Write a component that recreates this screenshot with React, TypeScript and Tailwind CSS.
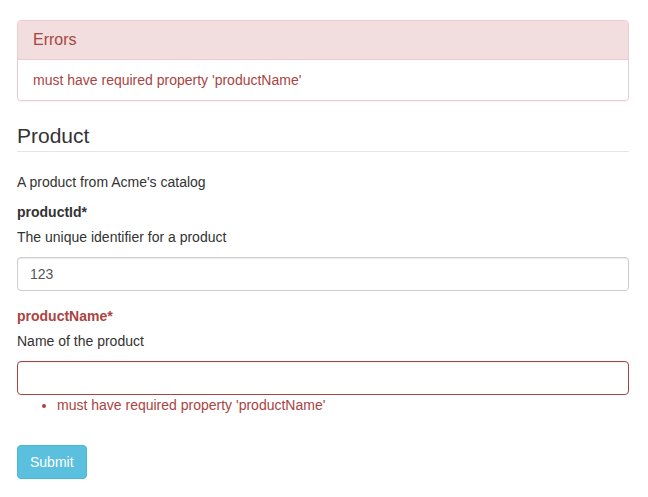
export default function App() {
  return (
    <div className="min-h-[497px] bg-white pl-[17px] pr-[19px] pt-[20px] font-['Liberation_Sans',Arial,sans-serif] text-[14px] leading-[20px] text-[#333]">
      <div className="mb-[20px] rounded-[4px] border border-[#ebccd1] shadow-[0_1px_1px_rgba(0,0,0,0.05)]">
        <div className="rounded-t-[3px] border-b border-[#ebccd1] bg-[#f2dede] px-[15px] py-[10px]">
          <h3 className="text-[16px] leading-[17.6px] text-[#a94442]">Errors</h3>
        </div>
        <ul>
          <li className="px-[15px] py-[10px] text-[#a94442]">must have required property 'productName'</li>
        </ul>
      </div>

      <form>
        <fieldset>
          <legend className="mb-[20px] w-full border-b border-[#e5e5e5] text-[21px] leading-[30px] text-[#333]">Product</legend>
          <p className="mb-[10px]">A product from Acme's catalog</p>

          <Field label="productId*" description="The unique identifier for a product" value="123" />
          <Field label="productName*" description="Name of the product" value="" error="must have required property 'productName'" />
        </fieldset>

        <button
          type="button"
          className="mt-[15px] rounded-[4px] border border-[#46b8da] bg-[#5bc0de] px-[12px] py-[6px] text-[14px] leading-[20px] text-white"
        >
          Submit
        </button>
      </form>
    </div>
  )
}

interface FieldProps {
  label: string
  description: string
  value: string
  error?: string
}

function Field({ label, description, value, error }: FieldProps) {
  return (
    <div className="mb-[15px]">
      <label className={`mb-[5px] block font-bold ${error ? "text-[#a94442]" : "text-[#333]"}`}>{label}</label>
      <p className="mb-[10px]">{description}</p>
      <input
        type="text"
        readOnly
        value={value}
        className={`block h-[34px] w-full rounded-[4px] border bg-white px-[12px] py-[6px] text-[14px] text-[#555] shadow-[inset_0_1px_1px_rgba(0,0,0,0.075)] outline-none ${
          error ? "border-[#a94442]" : "border-[#ccc]"
        }`}
      />
      {error && (
        <ul className="mb-[10px] list-disc pl-[40px]">
          <li className="text-[#a94442]">{error}</li>
        </ul>
      )}
    </div>
  )
}
